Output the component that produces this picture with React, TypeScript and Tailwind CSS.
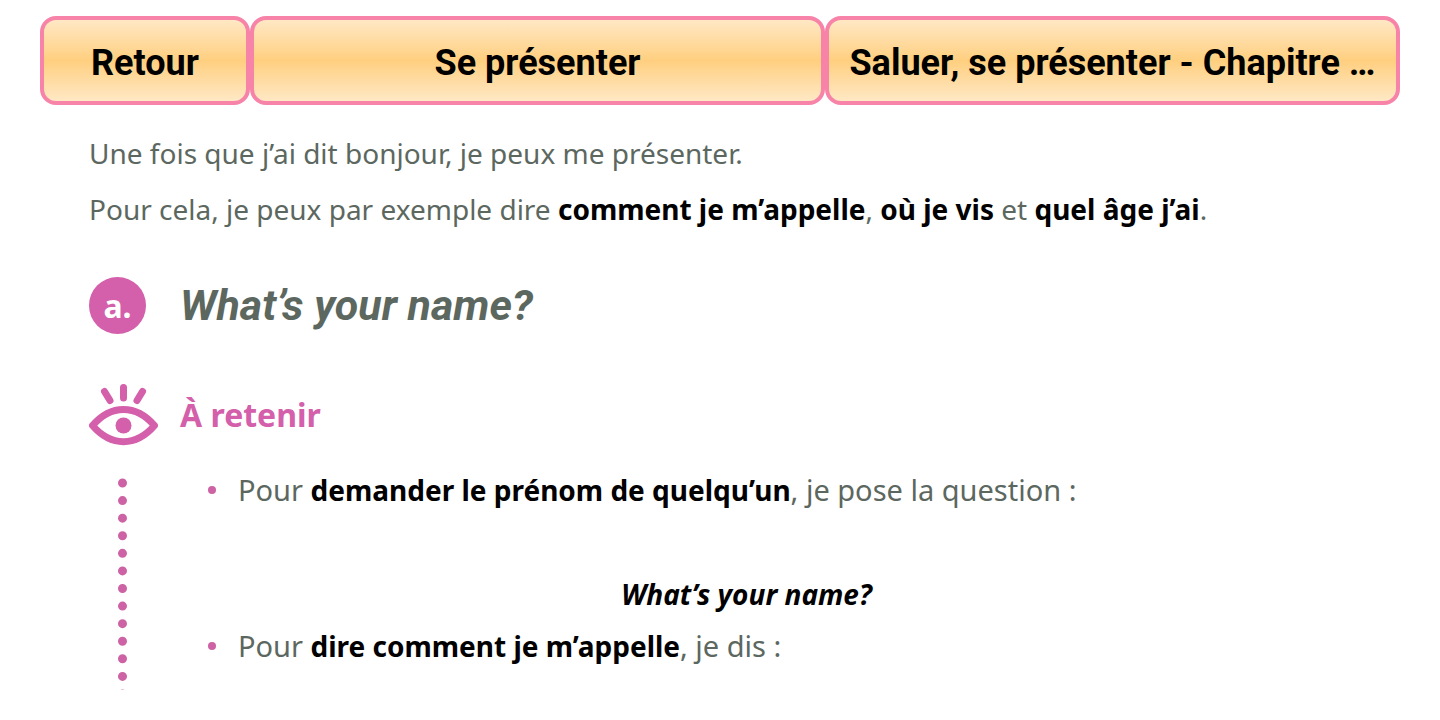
import type { ReactNode } from 'react';

const tabs = [
  { label: 'Retour', className: 'w-[210px] shrink-0' },
  { label: 'Se présenter', className: 'flex-1' },
  { label: 'Saluer, se présenter - Chapitre …', className: 'flex-1' },
];

export default function App() {
  return (
    <div className="min-h-screen bg-white pt-4 font-['Noto_Sans','Open_Sans',sans-serif] text-[#5c685f]">
      <nav className="mx-10 flex font-['Roboto',sans-serif]">
        {tabs.map((tab) => (
          <button
            key={tab.label}
            type="button"
            className={`h-[89px] min-w-0 truncate rounded-2xl border-4 border-[#f783a9] bg-linear-to-b from-[#ffe8c4] via-[#ffcf7f] to-[#ffe8c4] px-4 pt-1 text-4xl font-bold text-black ${tab.className}`}
          >
            {tab.label}
          </button>
        ))}
      </nav>

      <main className="px-[89px] pt-7 text-[28px] leading-10">
        <p>Une fois que j’ai dit bonjour, je peux me présenter.</p>
        <p className="mt-4">
          Pour cela, je peux par exemple dire <Strong>comment je m’appelle</Strong>,{' '}
          <Strong>où je vis</Strong> et <Strong>quel âge j’ai</Strong>.
        </p>

        <div className="mt-12 flex items-center">
          <div className="w-[91px] shrink-0">
            <span className="flex size-[57px] items-center justify-center rounded-full bg-[#d45faa] text-[32px] font-bold text-white">
              a.
            </span>
          </div>
          <h1 className="font-['Roboto',sans-serif] text-[43px] leading-[57px] font-bold italic">
            What’s your name?
          </h1>
        </div>

        <section className="mt-[50px]">
          <div className="flex items-center text-[#d45faa]">
            <div className="w-[91px] shrink-0">
              <EyeIcon />
            </div>
            <h2 className="text-[32px] font-bold">À retenir</h2>
          </div>

          <div className="mt-6 flex">
            <div className="w-[91px] shrink-0 pt-2">
              <DottedLine />
            </div>
            <ul className="flex-1 text-[29px]">
              <Item>
                Pour <Strong>demander le prénom de quelqu’un</Strong>, je pose la question :
                <p className="mt-16 pr-24 text-center text-[28px] font-bold text-black italic">
                  What’s your name?
                </p>
              </Item>
              <Item>
                Pour <Strong>dire comment je m’appelle</Strong>, je dis :
              </Item>
            </ul>
          </div>
        </section>
      </main>
    </div>
  );
}

function Strong({ children }: { children: ReactNode }) {
  return <strong className="text-[28px] font-bold text-black">{children}</strong>;
}

function Item({ children }: { children: ReactNode }) {
  return (
    <li className="mb-3 flex">
      <span className="mt-4 mr-[22px] ml-7 size-2 shrink-0 rounded-full bg-[#cd62a5]" />
      <div className="flex-1">{children}</div>
    </li>
  );
}

function EyeIcon() {
  return (
    <svg width="69" height="62" viewBox="0 0 69 62" fill="none" aria-hidden="true">
      <g stroke="currentColor" strokeWidth="7" strokeLinecap="round" strokeLinejoin="round">
        <path d="M15.500 7.500l5.500 9M34.500 3.500v10.500M53.500 7.500l-5.500 9" />
        <path d="M3.500 41.500C22 20 47 20 65.500 41.500C47 63 22 63 3.500 41.500Z" />
      </g>
      <circle cx="34.500" cy="41.500" r="8" fill="currentColor" />
    </svg>
  );
}

function DottedLine() {
  return (
    <svg width="69" height="212" viewBox="0 0 69 212" aria-hidden="true">
      <path
        d="M33.500 5V230"
        stroke="#cd62a5"
        strokeWidth="9"
        strokeLinecap="round"
        strokeDasharray="0 17.580"
      />
    </svg>
  );
}
